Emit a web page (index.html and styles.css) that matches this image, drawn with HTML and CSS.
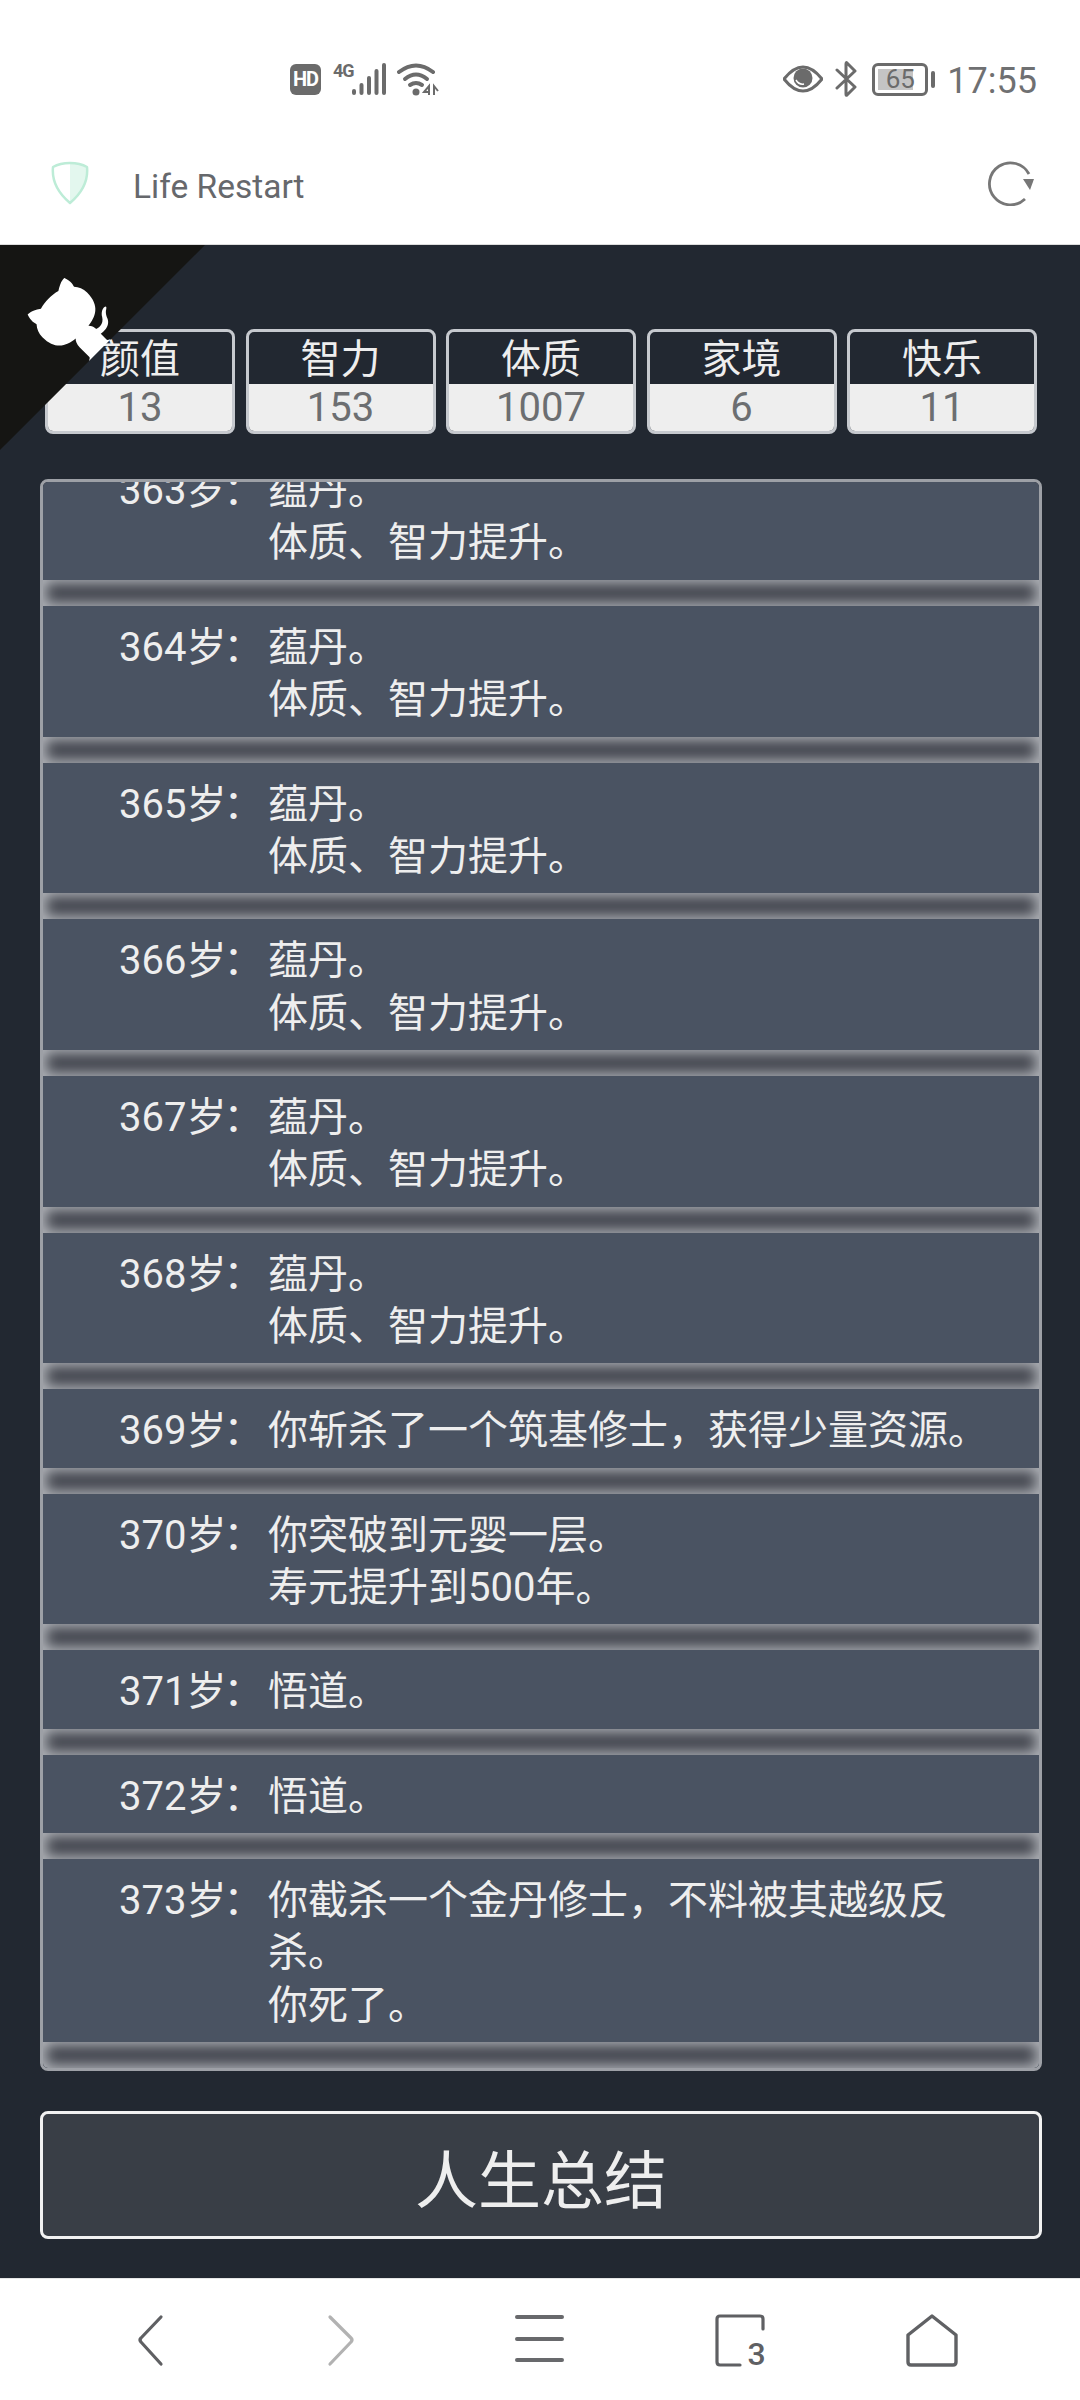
FILE: index.html
```html
<!DOCTYPE html>
<html lang="zh-CN">
<head>
    <meta charset="UTF-8">
    <meta name="viewport" content="width=device-width, initial-scale=1.0">
    <title>Life Restart</title>
    <link rel="stylesheet" href="styles.css">
</head>
<body>
    <div class="status-bar">
        <div class="status-left">
            <span class="hd-badge">HD</span>
            <span class="net-label">4G</span>
            <svg class="signal" width="36" height="32" viewBox="0 0 36 32"><g fill="#6b6b6b"><rect x="1" y="26" width="4" height="6" rx="2"/><rect x="8.500" y="20" width="4" height="12" rx="2"/><rect x="16" y="13" width="4" height="19" rx="2"/><rect x="23.500" y="6" width="4" height="26" rx="2"/><rect x="31" y="0" width="4" height="32" rx="2"/></g></svg>
            <svg class="wifi" width="42" height="34" viewBox="0 0 42 34"><g fill="none" stroke="#6b6b6b" stroke-width="4" stroke-linecap="round"><path d="M2 10 Q19 -3 36 10"/><path d="M8 17 Q19 8 30 17"/><path d="M13 23 Q19 19 25 23"/></g><circle cx="19" cy="30" r="3.500" fill="#6b6b6b"/><path d="M32 33 V24 L27 30 H33 M37 33 V24 L41 29" fill="none" stroke="#6b6b6b" stroke-width="2"/></svg>
        </div>
        <div class="status-right">
            <svg class="eye" width="40" height="28" viewBox="0 0 40 28"><path d="M1 14 Q20 -10 39 14 Q20 38 1 14 Z" fill="none" stroke="#6b6b6b" stroke-width="3"/><circle cx="20" cy="13" r="9.500" fill="#6b6b6b"/><path d="M13 15 Q16 20 21 19" fill="none" stroke="#fff" stroke-width="1.500"/></svg>
            <svg class="bluetooth" width="24" height="36" viewBox="0 0 24 36"><path d="M2 9 L20 26 L12 34 Q11 35 11 33 V3 Q11 1 12 2 L20 10 L2 27" fill="none" stroke="#6b6b6b" stroke-width="3" stroke-linecap="round" stroke-linejoin="round"/></svg>
            <div class="battery">
                <div class="battery-body">
                    <span class="battery-fill"></span>
                    <span class="battery-num">65</span>
                </div>
                <span class="battery-nub"></span>
            </div>
            <span class="clock">17:55</span>
        </div>
    </div>

    <div class="toolbar">
        <div class="toolbar-left">
            <svg class="shield" width="38" height="44" viewBox="0 0 38 44"><path d="M19 2 Q29 2 36 6 Q38 26 19 42 Z" fill="#e3f7ee"/><path d="M19 2 Q9 2 2 6 Q0 26 19 42 Q38 26 36 6 Q29 2 19 2 Z" fill="none" stroke="#bdecd7" stroke-width="2.500" stroke-linejoin="round"/></svg>
            <span class="page-title">Life Restart</span>
        </div>
        <svg class="reload" width="48" height="46" viewBox="0 0 48 46"><path d="M39 39 A21 21 0 1 1 43 14" fill="none" stroke="#777" stroke-width="2.800"/><path d="M37 19 L48 19 L44 30 Z" fill="#777"/></svg>
    </div>

    <main class="game">
        <svg class="corner" width="205" height="205" viewBox="0 0 250 250" aria-hidden="true">
            <path d="M0,0 L115,115 L130,115 L142,142 L250,250 L250,0 Z" fill="#151513"/>
            <path d="M128.3,109.0 C113.8,99.7 119.0,89.6 119.0,89.6 C122.0,82.7 120.5,78.6 120.5,78.6 C119.2,72.0 123.4,76.3 123.4,76.3 C127.3,80.9 125.5,87.3 125.5,87.3 C122.9,97.6 130.6,101.9 134.4,103.2" fill="#fff"/>
            <path d="M115.0,115.0 C114.9,115.1 118.7,116.5 119.8,115.4 L133.7,101.6 C136.9,99.2 139.9,98.4 142.2,98.6 C133.8,88.0 127.5,74.4 143.8,58.0 C148.5,53.4 154.0,51.2 159.7,51.0 C160.3,49.4 163.2,43.6 171.4,40.1 C171.4,40.1 176.1,42.5 178.8,56.2 C183.1,58.6 187.2,61.8 190.9,65.4 C194.5,69.0 197.7,73.2 200.1,77.6 C213.8,80.2 216.3,84.9 216.3,84.9 C212.7,93.1 206.9,96.0 205.4,96.6 C205.1,102.4 203.0,107.8 198.3,112.5 C181.9,128.9 168.3,122.5 157.7,114.1 C157.9,116.9 156.7,120.9 152.7,124.9 L141.0,136.5 C139.8,137.7 141.6,141.9 141.8,141.8 Z" fill="#fff"/>
        </svg>

        <div class="stats">
            <div class="stat"><div class="stat-name">颜值</div><div class="stat-value">13</div></div>
            <div class="stat"><div class="stat-name">智力</div><div class="stat-value">153</div></div>
            <div class="stat"><div class="stat-name">体质</div><div class="stat-value">1007</div></div>
            <div class="stat"><div class="stat-name">家境</div><div class="stat-value">6</div></div>
            <div class="stat"><div class="stat-name">快乐</div><div class="stat-value">11</div></div>
        </div>

        <ul class="trajectory">
            <li><span class="age">363岁<span class="colon">：</span></span><span class="event">蕴丹。<br>体质、智力提升。</span></li>
            <li><span class="age">364岁<span class="colon">：</span></span><span class="event">蕴丹。<br>体质、智力提升。</span></li>
            <li><span class="age">365岁<span class="colon">：</span></span><span class="event">蕴丹。<br>体质、智力提升。</span></li>
            <li><span class="age">366岁<span class="colon">：</span></span><span class="event">蕴丹。<br>体质、智力提升。</span></li>
            <li><span class="age">367岁<span class="colon">：</span></span><span class="event">蕴丹。<br>体质、智力提升。</span></li>
            <li><span class="age">368岁<span class="colon">：</span></span><span class="event">蕴丹。<br>体质、智力提升。</span></li>
            <li><span class="age">369岁<span class="colon">：</span></span><span class="event">你斩杀了一个筑基修士，获得少量资源。</span></li>
            <li><span class="age">370岁<span class="colon">：</span></span><span class="event">你突破到元婴一层。<br>寿元提升到500年。</span></li>
            <li><span class="age">371岁<span class="colon">：</span></span><span class="event">悟道。</span></li>
            <li><span class="age">372岁<span class="colon">：</span></span><span class="event">悟道。</span></li>
            <li><span class="age">373岁<span class="colon">：</span></span><span class="event">你截杀一个金丹修士，不料被其越级反杀。<br>你死了。</span></li>
        </ul>

        <button type="button" class="summary-button">人生总结</button>
    </main>

    <nav class="bottom-nav">
        <svg width="60" height="56" viewBox="0 0 60 56"><path d="M41 5 L21 26 Q19 28 21 30 L41 52" fill="none" stroke="#5f6063" stroke-width="3.200" stroke-linecap="round"/></svg>
        <svg width="60" height="56" viewBox="0 0 60 56"><path d="M15 5 L36 26 Q38 28 36 30 L15 52" fill="none" stroke="#b2b2b2" stroke-width="3.200" stroke-linecap="round"/></svg>
        <svg width="60" height="56" viewBox="0 0 60 56"><path d="M7 5 H52 M7 27 H52 M7 48 H52" fill="none" stroke="#68696c" stroke-width="4" stroke-linecap="round"/></svg>
        <div class="tabs-icon">
            <svg width="60" height="56" viewBox="0 0 60 56"><path d="M35 53 H15 Q12 53 12 50 V7 Q12 4 15 4 H55 Q58 4 58 7 V17" fill="none" stroke="#5f6063" stroke-width="3.200" stroke-linecap="round"/></svg>
            <span class="tabs-count">3</span>
        </div>
        <svg width="60" height="56" viewBox="0 0 60 56"><path d="M32 4 L56 23 V50 Q56 53 53 53 H11 Q8 53 8 50 V23 Z" fill="none" stroke="#606164" stroke-width="3.400" stroke-linejoin="round"/></svg>
    </nav>
</body>
</html>
```

FILE: styles.css
```css
* {
    box-sizing: border-box;
}

body {
    display: flex;
    flex-direction: column;
    width: 1080px;
    height: 2400px;
    margin: 0;
    overflow: hidden;
    background-color: #fff;
    font-family: Roboto, "Noto Sans CJK SC", sans-serif;
}

/* status bar */
.status-bar {
    display: flex;
    justify-content: space-between;
    align-items: center;
    height: 122px;
    padding: 36px 43px 0 290px;
    color: #6b6b6b;
}

.status-left, .status-right {
    display: flex;
    align-items: center;
}

.hd-badge {
    width: 31px;
    height: 31px;
    margin-right: 12px;
    border-radius: 6px;
    background-color: #6b6b6b;
    color: #fff;
    font-size: 20px;
    font-weight: 700;
    line-height: 31px;
    text-align: center;
    letter-spacing: -1px;
}

.net-label {
    align-self: flex-start;
    width: 18px;
    font-size: 18px;
    font-weight: 700;
    line-height: 18px;
    letter-spacing: -1px;
}

.wifi {
    margin-left: 10px;
}

.eye {
    margin-right: 12px;
}

.bluetooth {
    margin-right: 13px;
}

.battery {
    display: flex;
    align-items: center;
    gap: 3px;
    margin-right: 12px;
}

.battery-body {
    display: flex;
    justify-content: center;
    position: relative;
    width: 56px;
    height: 33px;
    border: 3px solid #6b6b6b;
    border-radius: 6px;
}

.battery-fill {
    position: absolute;
    left: 3px;
    top: 3px;
    bottom: 3px;
    width: 35px;
    background-color: #c4c4c4;
}

.battery-num {
    position: relative;
    font-size: 26px;
    line-height: 27px;
}

.battery-nub {
    width: 4px;
    height: 17px;
    border-radius: 2px;
    background-color: #6b6b6b;
}

.clock {
    padding-top: 4px;
    font-size: 36px;
    line-height: 40px;
    color: #6f7072;
}

/* toolbar */
.toolbar {
    display: flex;
    justify-content: space-between;
    align-items: center;
    height: 123px;
    padding: 0 46px 0 51px;
    border-bottom: 1px solid #ddd;
}

.toolbar-left {
    display: flex;
    align-items: center;
}

.shield {
    margin-right: 44px;
}

.page-title {
    padding-top: 6px;
    font-size: 33.500px;
    color: #66686c;
}

/* game */
.game {
    display: flex;
    flex-direction: column;
    position: relative;
    flex: 1;
    min-height: 0;
    padding: 84px 38px 39px 40px;
    background-color: #222831;
}

.corner {
    position: absolute;
    top: 0;
    left: 0;
    z-index: 2;
    transform: scale(-1, 1);
}

.stats {
    display: grid;
    grid-template-columns: repeat(5, 1fr);
    gap: 10.500px;
    padding: 0 5px;
}

.stat {
    height: 105px;
    border: 3px solid #c6c9ce;
    border-radius: 8px;
    text-align: center;
}

.stat-name {
    height: 52px;
    color: #eee;
    font-size: 40px;
    line-height: 56px;
}

.stat-value {
    height: 47px;
    border-radius: 0 0 5px 5px;
    background-color: #eee;
    color: #6c6e71;
    font-size: 40px;
    line-height: 48px;
}

.trajectory {
    display: flex;
    flex-direction: column;
    justify-content: flex-end;
    flex: 1;
    min-height: 0;
    margin: 45px 0 0;
    padding: 0;
    overflow: hidden;
    border: 3px solid #9da0a6;
    border-radius: 8px;
    list-style: none;
    color: #eee;
    font-size: 40px;
    line-height: 52.350px;
}

.trajectory li {
    display: grid;
    grid-template-columns: 225px 1fr;
    flex-shrink: 0;
    padding-top: 16px;
    background-color: #4a5362;
}

.trajectory li::after {
    content: "";
    grid-column: 1 / -1;
    height: 26px;
    margin-top: 10px;
    background-color: #40434c;
    box-shadow: inset 0 0 14px 3px #b4b7bc;
}

.age {
    padding-left: 76px;
    white-space: nowrap;
}

.colon {
    margin-left: -3px;
    font-family: "Noto Sans CJK TC", sans-serif;
    line-height: 1;
}

.event {
    padding-right: 36px;
}

.summary-button {
    height: 128px;
    margin-top: 40px;
    padding: 0;
    border: 3px solid #f2f2f2;
    border-radius: 8px;
    background-color: #393e46;
    color: #eee;
    font-family: inherit;
    font-size: 63px;
}

/* bottom nav */
.bottom-nav {
    display: grid;
    grid-template-columns: repeat(5, 1fr);
    justify-items: center;
    align-items: center;
    height: 122px;
    padding: 0 53px;
    border-top: 1px solid #e6e6e6;
}

.tabs-icon {
    position: relative;
    height: 56px;
}

.tabs-count {
    position: absolute;
    right: -3px;
    bottom: -3px;
    padding: 0 2px;
    background-color: #fff;
    color: #5f6063;
    font-size: 32px;
    font-weight: 500;
    line-height: 34px;
}
```
